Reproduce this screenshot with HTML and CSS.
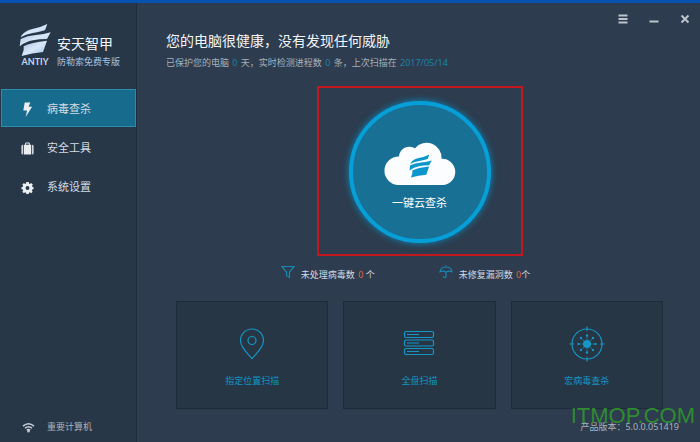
FILE: index.html
```html
<!DOCTYPE html>
<html lang="zh-CN">
<head>
<meta charset="utf-8">
<title>安天智甲</title>
<link rel="stylesheet" href="styles.css">
</head>
<body>
<svg class="defs" aria-hidden="true">
  <defs>
    <linearGradient id="steel" x1="0" y1="0" x2="1" y2="1">
      <stop offset="0" stop-color="#a9bfe0"/>
      <stop offset="0.5" stop-color="#d8e8fa"/>
      <stop offset="1" stop-color="#a3c2e6"/>
    </linearGradient>
    <symbol id="blades" viewBox="0 0 96 100">
      <path d="M8 36Q18 22 40 17Q66 12 85 2L78 21Q58 27 38 30Q20 33 5 42Z"/>
      <path d="M5 47Q25 37 50 35Q75 33 95 27L84 47Q60 47 42 51Q20 55 2 69Z"/>
      <path d="M14 69Q36 57 84 52L72 86Q40 89 8 98L14 80Z"/>
    </symbol>
  </defs>
</svg>
<div class="window">
  <aside class="sidebar">
    <div class="brand">
      <div class="brand-mark">
        <svg class="brand-logo" fill="url(#steel)" aria-hidden="true"><use href="#blades"/></svg>
        <span class="brand-latin">ANTIY</span>
      </div>
      <div class="brand-text">
        <span class="brand-name">安天智甲</span>
        <span class="brand-edition">防勒索免费专版</span>
      </div>
    </div>
    <nav class="nav">
      <a class="nav-item active" href="#scan">
        <svg class="nav-icon" viewBox="0 0 14 16"><path d="M4 0.500H10L8.200 5H12L5 16L6.500 9H2.500Z"/></svg>
        <span>病毒查杀</span>
      </a>
      <a class="nav-item" href="#tools">
        <svg class="nav-icon" viewBox="0 0 14 16"><path d="M2 4V14.500Q0.500 14.500 0.500 13V5.500Q0.500 4 2 4ZM3 4H4.500V2.500Q4.500 1.500 5.500 1.500H8.500Q9.500 1.500 9.500 2.500V4H11V14.500H3ZM5.500 4H8.500V2.500H5.500ZM12 4Q13.500 4 13.500 5.500V13Q13.500 14.500 12 14.500Z" fill-rule="evenodd"/></svg>
        <span>安全工具</span>
      </a>
      <a class="nav-item" href="#settings">
        <svg class="nav-icon" viewBox="0 0 14 16">
          <path d="M5.700 2H8.300L8.600 3.700L9.500 4.100L10.900 3.100L12.800 5L11.800 6.400L12.200 7.300L13.500 7.600V9.900L12 10.200L11.600 11.100L12.600 12.500L10.900 14.200L9.500 13.200L8.600 13.600L8.300 15H5.700L5.400 13.600L4.500 13.200L3.100 14.200L1.400 12.500L2.400 11.100L2 10.200L0.500 9.900V7.600L2 7.300L2.400 6.400L1.400 5L3.100 3.100L4.500 4.100L5.400 3.700ZM7 6.500A2.100 2.100 0 1 0 7 10.700A2.100 2.100 0 1 0 7 6.500Z" fill-rule="evenodd"/>
        </svg>
        <span>系统设置</span>
      </a>
    </nav>
    <div class="machine">
      <svg class="machine-icon" viewBox="0 0 14 12" fill="none" stroke="currentColor" stroke-width="1.700">
        <path d="M1 4.500Q7 -0.800 13 4.500M3.200 6.800Q7 3.600 10.800 6.800M5.200 9Q7 7.400 8.800 9"/>
        <circle cx="7" cy="10" r="0.600"/>
      </svg>
      <span>重要计算机</span>
    </div>
  </aside>

  <main class="main">
    <div class="window-controls">
      <button type="button" aria-label="菜单"><svg viewBox="0 0 10 10"><path d="M0.500 1.500H9.500M0.500 5H9.500M0.500 8.500H9.500"/></svg></button>
      <button type="button" aria-label="最小化"><svg viewBox="0 0 10 10"><path d="M0.500 7.500H9.500"/></svg></button>
      <button type="button" aria-label="关闭"><svg viewBox="0 0 10 10"><path d="M1.500 1.500L8.500 8.500M8.500 1.500L1.500 8.500"/></svg></button>
    </div>
    <header class="status">
      <h1>您的电脑很健康，没有发现任何威胁</h1>
      <p>已保护您的电脑 <b>0</b> 天，实时检测进程数 <b>0</b> 条，上次扫描在 <b>2017/05/14</b></p>
    </header>

    <div class="content">
      <div class="highlight">
        <button type="button" class="scan">
          <svg class="cloud" viewBox="0 0 72 44" aria-hidden="true">
            <path fill="#fbfdff" d="M14.500 44A14.300 14.300 0 0 1 15 15.400A10.500 10.500 0 0 1 31 7.200A15 15 0 0 1 57.500 17.800A13.100 13.100 0 1 1 58.800 44Z"/>
            <use href="#blades" x="25" y="13" width="23" height="24" fill="#0b96cc"/>
          </svg>
          <span>一键云查杀</span>
        </button>
      </div>

      <div class="stats">
        <div class="stat">
          <svg viewBox="0 0 14 14"><path d="M1 1.500H13L8.500 7V12.500L5.500 10.500V7Z"/></svg>
          <span>未处理病毒数 <em>0</em> 个</span>
        </div>
        <div class="stat">
          <svg viewBox="0 0 14 14"><path d="M7 0.500V2M1 7Q1.500 2 7 2T13 7L10 6L7 7L4 6ZM7 7V11.500Q7 12.700 5.500 12.500T4.500 11"/></svg>
          <span>未修复漏洞数 <em>0</em>个</span>
        </div>
      </div>

      <div class="cards">
        <button type="button" class="card">
          <svg viewBox="0 0 36 36"><path d="M18 32.500C14 28 6.500 21.500 6.500 14.500A11.500 11.500 0 0 1 29.500 14.500C29.500 21.500 22 28 18 32.500Z"/><circle cx="18" cy="14.500" r="4"/></svg>
          <span>指定位置扫描</span>
        </button>
        <button type="button" class="card">
          <svg viewBox="0 0 36 36"><rect x="3.500" y="5.500" width="29" height="6" rx="1.500"/><rect x="3.500" y="14" width="29" height="6" rx="1.500"/><rect x="3.500" y="22.500" width="29" height="6" rx="1.500"/><path d="M6 8.500H18M6 17H18M6 25.500H18"/></svg>
          <span>全盘扫描</span>
        </button>
        <button type="button" class="card">
          <svg viewBox="0 0 36 36">
            <circle cx="18" cy="18" r="15"/>
            <path d="M18 0.500V5M18 31V35.500M0.500 18H5M31 18H35.500"/>
            <path class="thin" d="M18 9.500V26.500M9.500 18H26.500M12 12L24 24M24 12L12 24"/>
            <g class="solid"><circle cx="18" cy="18" r="4"/><circle cx="18" cy="9.500" r="1.200"/><circle cx="18" cy="26.500" r="1.200"/><circle cx="9.500" cy="18" r="1.200"/><circle cx="26.500" cy="18" r="1.200"/><circle cx="12" cy="12" r="1.200"/><circle cx="24" cy="12" r="1.200"/><circle cx="12" cy="24" r="1.200"/><circle cx="24" cy="24" r="1.200"/></g>
          </svg>
          <span>宏病毒查杀</span>
        </button>
      </div>
    </div>
    <footer class="version">产品版本：5.0.0.051419</footer>
    <div class="watermark">ITMOP.COM</div>
  </main>
</div>
</body>
</html>
```
FILE: styles.css
```css
* { box-sizing: border-box; }

body {
  margin: 0;
  color: #d3dae1;
  background: #2d3c4e;
  font: 9px/12px "Noto Sans", "Noto Sans CJK SC", sans-serif;
}

button {
  margin: 0;
  padding: 0;
  border: 0;
  background: none;
  color: inherit;
  font: inherit;
}

.defs { position: absolute; width: 0; height: 0; }

.window {
  display: flex;
  min-height: 100vh;
  border-top: 3px solid #0552b0;
}

.sidebar {
  display: flex;
  flex: 0 0 137px;
  flex-direction: column;
  background: #283747;
  border-right: 1px solid #202e3c;
}

.brand {
  display: flex;
  gap: 7px;
  height: 86px;
  padding: 20px 0 0 20px;
}

.brand-mark {
  display: flex;
  flex-direction: column;
  align-items: center;
  width: 30px;
}

.brand-logo { width: 32px; height: 34px; }

.brand-latin {
  color: #c5d6ea;
  font-family: Lato, sans-serif;
  font-size: 9px;
  font-weight: 700;
  line-height: 10px;
}

.brand-text {
  display: flex;
  flex-direction: column;
  padding-top: 11px;
  white-space: nowrap;
}

.brand-name {
  color: #f4f8fc;
  font-size: 14px;
  line-height: 20px;
}

.brand-edition { padding-top: 2px; color: #a5c4e5; }

.nav {
  display: flex;
  flex-direction: column;
  gap: 1px;
}

.nav-item {
  display: flex;
  align-items: center;
  gap: 13px;
  height: 38px;
  margin-left: 1px;
  padding: 2px 0 0 19px;
  border: 1px solid transparent;
  color: #d5dce3;
  font-size: 11px;
  text-decoration: none;
}

.nav-item.active {
  background: #176b8d;
  border-color: #2b8caf;
}

.nav-icon { width: 13px; height: 15px; fill: #eceff2; }

.machine {
  display: flex;
  align-items: center;
  gap: 12px;
  margin-top: auto;
  padding: 0 0 9px 22px;
  color: #a9b3bd;
}

.machine-icon { width: 13px; height: 11px; color: #c9cfd5; }

.main {
  position: relative;
  display: flex;
  flex: 1;
  flex-direction: column;
}

.window-controls {
  display: flex;
  justify-content: flex-end;
  gap: 20px;
  padding: 11px 9px 0 0;
}

.window-controls button { width: 11px; height: 10px; }

.window-controls svg {
  display: block;
  width: 10px;
  height: 10px;
  fill: none;
  stroke: #bcc4cb;
  stroke-width: 2;
}

.status { padding: 5px 0 0 29px; }

.status h1 {
  margin: 0;
  color: #f2f5f7;
  font-size: 14px;
  font-weight: 400;
  line-height: 24px;
}

.status p { margin: 4px 0 0; color: #a7b1bb; }

.status b { margin: 0 1px; color: #1b83a6; font-weight: 400; }

.content {
  display: flex;
  flex-direction: column;
  align-items: center;
  padding: 17px 37px 0 39px;
}

.highlight {
  padding: 13px 30px 11px;
  border: 2px solid #c4161e;
}

.scan {
  display: flex;
  flex-direction: column;
  align-items: center;
  gap: 12px;
  width: 142px;
  height: 142px;
  padding-top: 36px;
  border: 4px solid #069fd8;
  border-radius: 50%;
  background: #197095;
  box-shadow: 0 0 7px #078fc4;
  color: #ffffff;
  font-size: 11px;
}

.cloud { width: 72px; height: 44px; }

.stats {
  display: flex;
  gap: 64px;
  padding: 9px 28px 0 0;
}

.stat {
  display: flex;
  gap: 6px;
  line-height: 20px;
}

.stat svg {
  width: 14px;
  height: 14px;
  fill: none;
  stroke: #1789b3;
  stroke-width: 1.2;
}

.stat em { margin-left: 1px; color: #e0643e; font-style: normal; }

.cards {
  display: grid;
  grid-template-columns: repeat(3, 1fr);
  gap: 15px;
  width: 100%;
  padding-top: 16px;
}

.card {
  display: flex;
  flex-direction: column;
  align-items: center;
  gap: 13px;
  height: 108px;
  padding-top: 24px;
  border: 1px solid #1e2c39;
  background: #263645;
  color: #1295c4;
}

.card svg {
  width: 36px;
  height: 36px;
  fill: none;
  stroke: #1795c5;
  stroke-width: 1.2;
}

.card .thin { stroke-width: 0.6; }

.card .solid { fill: #1795c5; stroke: none; }

.version {
  margin-top: auto;
  padding: 0 21px 9px 0;
  color: #a9b3bd;
  text-align: right;
}

.watermark {
  position: absolute;
  right: 5px;
  bottom: 14px;
  color: #2f8b30;
  font: 22px/24px "Liberation Sans", sans-serif;
}
```
